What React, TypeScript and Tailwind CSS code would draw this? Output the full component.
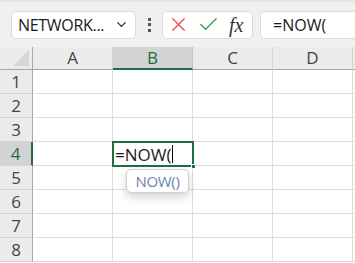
import { ChevronDown, X, Check } from "lucide-react";

const cols = ["A", "B", "C", "D"];
const rows = [1, 2, 3, 4, 5, 6, 7, 8];

export default function App() {
  return (
    <div
      className="w-[355px] h-[263px] overflow-hidden bg-white text-[#222]"
      style={{ fontFamily: '"Open Sans", "Noto Sans", sans-serif' }}
    >
      {/* formula bar */}
      <div className="h-[47px] bg-[#f0f0f0] border-t-[2px] border-[#e6e6e6] flex items-center pl-[11px]">
        <div className="w-[125px] h-[28px] bg-white border border-[#dcdcdc] rounded-[5px] flex items-center justify-between pl-[6px] pr-[6px]">
          <span className="text-[16px] tracking-[-0.3px] text-[#1a1a1a]">NETWORK...</span>
          <ChevronDown size={15} strokeWidth={2.2} className="text-[#333]" />
        </div>
        <div className="w-[26px] flex flex-col items-center gap-[2.5px]">
          <span className="w-[3px] h-[3px] bg-[#555]" />
          <span className="w-[3px] h-[3px] bg-[#555]" />
          <span className="w-[3px] h-[3px] bg-[#555]" />
        </div>
        <div className="w-[91px] h-[28px] bg-white border border-[#dcdcdc] rounded-[5px] flex items-center pl-[4px] gap-[7px]">
          <X size={23} strokeWidth={1.3} className="text-[#e8474b]" />
          <Check size={23} strokeWidth={1.5} className="text-[#3d9e4e]" />
          <span
            className="text-[20px] italic text-[#333] leading-none ml-[2px]"
            style={{ fontFamily: '"Liberation Serif", "DejaVu Serif", serif' }}
          >
            fx
          </span>
        </div>
        <div className="ml-[7px] flex-1 h-[28px] bg-white border border-[#dcdcdc] rounded-l-[5px] border-r-0 flex items-center pl-[12px]">
          <span className="text-[16px] text-[#1a1a1a]">=NOW(</span>
        </div>
      </div>

      {/* sheet */}
      <div className="grid grid-cols-[33px_80px_80px_80px_80px_2px] grid-rows-[23px_repeat(8,24px)]">
        <div className="bg-[#ebebeb] border-r border-b border-[#a8a8a8] flex items-end justify-end pr-[3px] pb-[3px]">
          <svg width="16" height="16" viewBox="0 0 16 16">
            <path d="M16 0 L16 16 L0 16 Z" fill="#d6d6d6" />
          </svg>
        </div>
        {cols.map((c) => (
          <div
            key={c}
            className={
              c === "B"
                ? "bg-[#d3d3d3] border-b-[2px] border-[#1e6e42] border-r border-r-[#c4c4c4] flex items-center justify-center text-[17px] text-[#1e6e42]"
                : "bg-[#ebebeb] border-b border-[#a8a8a8] border-r border-r-[#d4d4d4] flex items-center justify-center text-[17px] text-[#444]"
            }
          >
            {c}
          </div>
        ))}
        <div className="bg-[#ebebeb] border-b border-[#a8a8a8]" />
        {rows.map((r) => (
          <Row key={r} r={r} />
        ))}
      </div>
    </div>
  );
}

function Row({ r }: { r: number }) {
  const active = r === 4;
  return (
    <>
      <div
        className={
          active
            ? "bg-[#d3d3d3] border-r-[2px] border-[#1e6e42] border-b border-b-[#d4d4d4] flex items-center justify-center text-[17px] text-[#1e6e42]"
            : "bg-[#ebebeb] border-r border-[#a8a8a8] border-b border-b-[#d4d4d4] flex items-center justify-center text-[17px] text-[#444]"
        }
      >
        {r}
      </div>
      {cols.map((c) => (
        <div key={c} className="border-r border-b border-[#dcdcdc] relative">
          {active && c === "B" && (
            <>
              <div className="absolute left-[-1px] top-[-1px] w-[82px] h-[26px] border-[2px] border-[#1e6e42] z-10 flex items-center pl-[1px]">
                <span className="text-[17px] text-[#1a1a1a] leading-none">=NOW(</span>
                <span className="w-[1px] h-[18px] bg-black ml-[1px]" />
                <span className="absolute right-[-4px] bottom-[-4px] w-[5px] h-[5px] bg-[#1e6e42] border border-white" />
              </div>
              <div className="absolute left-[13px] top-[27px] w-[63px] h-[24px] bg-white border border-[#d0d0d0] rounded-[5px] shadow-[0_4px_10px_rgba(0,0,0,0.18)] z-20 flex items-center justify-center text-[15px] tracking-[-0.3px] text-[#6b84a8]">
                NOW()
              </div>
            </>
          )}
        </div>
      ))}
      <div className="border-b border-[#dcdcdc]" />
    </>
  );
}
